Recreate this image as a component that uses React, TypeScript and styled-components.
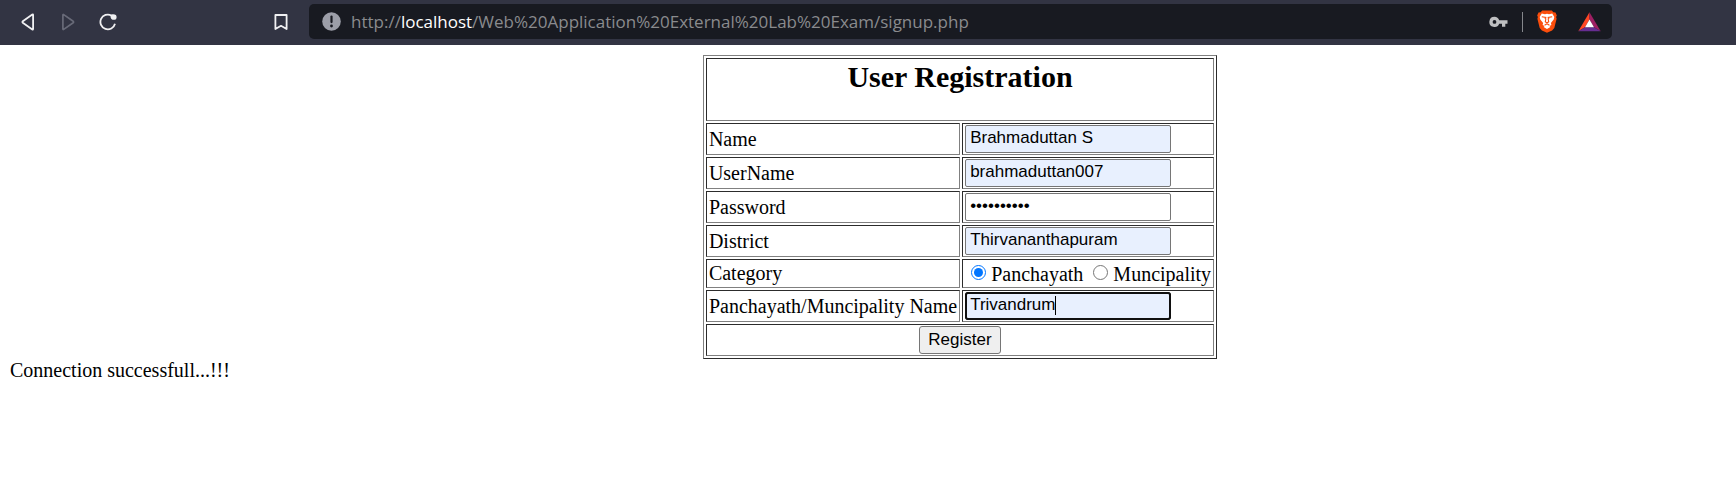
import React, { useEffect, useLayoutEffect, useRef, useState } from "react";
import styled, { createGlobalStyle } from "styled-components";

const GlobalStyle = createGlobalStyle`
  * { box-sizing: border-box; }
  body {
    margin: 0;
    background: #fff;
    color: #000;
    font-family: "Liberation Serif", "Times New Roman", serif;
    font-size: 20px;
    line-height: 23px;
  }
`;

const Toolbar = styled.header`
  display: flex;
  align-items: center;
  height: 45px;
  padding: 0 124px 2px 16px;
  background: #323443;
`;

const NavGroup = styled.nav`
  display: flex;
  flex: 1;
  gap: 16px;
  max-width: 253px;
`;

const ToolButton = styled.button`
  display: flex;
  align-items: center;
  justify-content: center;
  width: 24px;
  height: 24px;
  padding: 0;
  border: 0;
  background: none;
  color: #f0f0f2;

  &:disabled { color: #686a78; }
`;

const AddressBar = styled.div`
  display: flex;
  flex: 1;
  align-items: center;
  gap: 10px;
  height: 35px;
  margin-left: 16px;
  padding: 0 11px 0 13px;
  border-radius: 5px;
  background: #181a21;
`;

const Address = styled.div`
  flex: 1;
  color: #8a8b8e;
  font-family: "Open Sans", "Noto Sans", sans-serif;
  font-size: 17px;
  line-height: 24px;
  white-space: nowrap;
`;

const Host = styled.span`
  color: #fff;
`;

const Extras = styled.div<{ $gap: number }>`
  display: flex;
  align-items: center;
  gap: ${(p) => p.$gap}px;
`;

const Divider = styled.span`
  width: 1px;
  height: 20px;
  background: #85878c;
`;

const Page = styled.main`
  padding: 10px;
`;

const Form = styled.form`
  padding-left: 184px;
`;

const FormTable = styled.table`
  margin: 0 auto;
  border: 1px solid;
  border-color: #808080 #2c2c2c #2c2c2c #808080;
  border-spacing: 2px;
`;

const Cell = styled.td<{ $center?: boolean }>`
  padding: 1px 2px;
  border: 1px solid;
  border-color: #2c2c2c #808080 #808080 #2c2c2c;
  text-align: ${(p) => (p.$center ? "center" : "left")};
  white-space: nowrap;
`;

const Title = styled.h2`
  margin: 0 0 25px;
  font-size: 30px;
  line-height: 34px;
`;

const FieldBox = styled.div`
  position: relative;
  width: 206px;
`;

const TextField = styled.input<{ $filled?: boolean }>`
  display: block;
  width: 206px;
  height: 28px;
  padding: 0 4px 2px;
  border: 1px solid #767676;
  border-radius: 2px;
  background: ${(p) => (p.$filled ? "#e8f0fe" : "#fff")};
  color: #000;
  font-family: "Liberation Sans", Arial, sans-serif;
  font-size: 17px;

  &:focus {
    border-color: #101010;
    border-radius: 3px;
    outline: 2px solid #101010;
    outline-offset: -2px;
  }
`;

const CaretField = styled(TextField)`
  caret-color: transparent;
`;

const Caret = styled.span`
  position: absolute;
  top: 4px;
  width: 1px;
  height: 19px;
  background: #000;
  pointer-events: none;
`;

const Choices = styled.div`
  display: flex;
  align-items: center;
  gap: 10px;
  height: 25px;
  padding-left: 6px;
`;

const Choice = styled.label`
  display: flex;
  align-items: center;
  gap: 5px;
  padding-top: 2px;
`;

const Radio = styled.input`
  width: 15px;
  height: 15px;
  margin: 0 0 4px;
`;

const SubmitButton = styled.button`
  display: block;
  height: 28px;
  margin: 0 auto;
  padding: 0 8px 1px;
  border: 1px solid #767676;
  border-radius: 3px;
  background: #efefef;
  color: #000;
  font-family: "Liberation Sans", Arial, sans-serif;
  font-size: 17px;
`;

const Status = styled.p`
  margin: 0;
`;

const BackIcon = () => (
  <svg width="14" height="18" viewBox="0 0 14 18" fill="none" stroke="currentColor" strokeWidth="1.8" strokeLinejoin="round">
    <path d="M12.1 1.9q0-.8-.8-.3L1.800 8.300q-.8.7 0 1.400l9.500 6.700q.8.5.8-.3z" />
  </svg>
);

const ForwardIcon = () => (
  <svg width="14" height="18" viewBox="0 0 14 18" fill="none" stroke="currentColor" strokeWidth="1.700" strokeLinejoin="round">
    <path d="M1.900 1.900q0-.8.8-.3l9.500 6.700q.8.700 0 1.400l-9.500 6.700q-.8.500-.8-.3z" />
  </svg>
);

const ReloadIcon = () => (
  <svg width="18" height="18" viewBox="0 0 18 18" fill="none">
    <path d="M12.400 2.500A7.400 7.400 0 1 0 16 10.800" stroke="currentColor" strokeWidth="1.800" />
    <path d="M11.500 3.200Q11.500 1.300 13.500 1.300Q17.800 1 17.600 4.600Q17.400 7 15.500 6.800Q11.500 7 11.500 3.200z" fill="currentColor" />
  </svg>
);

const BookmarkIcon = () => (
  <svg width="14" height="18" viewBox="0 0 14 18" fill="none" stroke="currentColor" strokeWidth="1.8" strokeLinejoin="round">
    <path d="M1.400 2h11.200v14L7 12.800 1.400 16z" />
  </svg>
);

const InfoIcon = () => (
  <svg width="19" height="19" viewBox="0 0 19 19">
    <circle cx="9.5" cy="9.5" r="9.3" fill="#9c9ea8" />
    <path d="M9.500 4.500v5.600" stroke="#181a21" strokeWidth="2.200" strokeLinecap="round" />
    <circle cx="9.5" cy="14" r="1.4" fill="#181a21" />
  </svg>
);

const KeyIcon = () => (
  <svg width="19" height="12" viewBox="0 0 19 12">
    <path d="M5.500.8a5.100 5.100 0 1 0 4.700 7H13v3h3.300v-3H18.500V4.200h-8.300A5.100 5.100 0 0 0 5.500.8z" fill="#bfc0c2" />
    <circle cx="5.5" cy="5.900" r="1.900" fill="#181a21" />
  </svg>
);

const LionIcon = () => (
  <svg width="20" height="23" viewBox="0 0 20 23">
    <path d="M5.200.5h9.600l1.500 1.700 2.200.2 1.300 3-.7 1.700.5 1.700-2.300 9.300-2.200 2.400-5.100 2.300-5.100-2.300-2.200-2.400L.4 8.800l.5-1.700L.2 5.400l1.300-3 2.200-.2z" fill="#fb4e0c" />
    <path d="M4.800 3.600 8 4.200l2-.5 2 .5 3.200-.6 2.100 3.400-.6 2.400-2.800 3.600.5 2-2 1 1 .9L10 19l-3.400-2.100 1-.9-2-1 .5-2-2.800-3.600-.6-2.400z" fill="#fff" />
    <path d="m4.800 6.700 4 .7-.9 1.400M15.200 6.700l-4 .7.900 1.400M8.900 8.500l-.6 3.200L10 13l1.700-1.300-.6-3.200M7.600 15.200 10 13.700l2.400 1.500" fill="none" stroke="#fb4e0c" strokeWidth="1.100" />
  </svg>
);

const TriangleIcon = () => (
  <svg width="23" height="20" viewBox="0 0 23 20">
    <path d="M11.500.3v7.200L7 15.300.3 19.300z" fill="#ff4724" />
    <path d="m11.500.3 11.200 19L16 15.300 11.500 7.500z" fill="#9e1f63" />
    <path d="M.3 19.300 7 15.300h9l6.700 4z" fill="#662d91" />
    <path d="m11.500 7.500 4.500 7.800H7z" fill="#fff" />
  </svg>
);

export default function App() {
  const [name, setName] = useState("Brahmaduttan S");
  const [userName, setUserName] = useState("brahmaduttan007");
  const [password, setPassword] = useState("password12");
  const [district, setDistrict] = useState("Thirvananthapuram");
  const [category, setCategory] = useState("panchayath");
  const [body, setBody] = useState("Trivandrum");
  const [caret, setCaret] = useState(0);
  const [focused, setFocused] = useState(true);
  const bodyField = useRef<HTMLInputElement>(null);

  // Keeps the drawn caret behind the last character before the insertion point.
  const placeCaret = () => {
    const field = bodyField.current;
    const context = document.createElement("canvas").getContext("2d");
    if (!field || !context) return;
    const style = getComputedStyle(field);
    context.font = `${style.fontSize} ${style.fontFamily}`;
    const before = field.value.slice(0, field.selectionStart ?? field.value.length);
    setCaret(Math.round(context.measureText(before).width) + 5);
  };

  useEffect(() => {
    const field = bodyField.current;
    field?.focus();
    field?.setSelectionRange(field.value.length, field.value.length);
    placeCaret();
  }, []);

  useLayoutEffect(placeCaret, [body]);

  return (
    <>
      <GlobalStyle />
      <Toolbar>
        <NavGroup aria-label="Browser">
          <ToolButton aria-label="Back"><BackIcon /></ToolButton>
          <ToolButton aria-label="Forward" disabled><ForwardIcon /></ToolButton>
          <ToolButton aria-label="Reload"><ReloadIcon /></ToolButton>
        </NavGroup>
        <ToolButton aria-label="Bookmark"><BookmarkIcon /></ToolButton>
        <AddressBar>
          <InfoIcon />
          <Address>
            http://<Host>localhost</Host>/Web%20Application%20External%20Lab%20Exam/signup.php
          </Address>
          <Extras $gap={12}>
            <ToolButton aria-label="Saved passwords"><KeyIcon /></ToolButton>
            <Divider />
            <Extras $gap={18}>
              <ToolButton aria-label="Shields"><LionIcon /></ToolButton>
              <ToolButton aria-label="Rewards"><TriangleIcon /></ToolButton>
            </Extras>
          </Extras>
        </AddressBar>
      </Toolbar>
      <Page>
        <Form onSubmit={(e) => e.preventDefault()}>
          <FormTable>
            <tbody>
              <tr>
                <Cell colSpan={2} $center><Title>User Registration</Title></Cell>
              </tr>
              <tr>
                <Cell><label htmlFor="name">Name</label></Cell>
                <Cell><TextField id="name" $filled value={name} onChange={(e) => setName(e.target.value)} /></Cell>
              </tr>
              <tr>
                <Cell><label htmlFor="username">UserName</label></Cell>
                <Cell><TextField id="username" $filled value={userName} onChange={(e) => setUserName(e.target.value)} /></Cell>
              </tr>
              <tr>
                <Cell><label htmlFor="password">Password</label></Cell>
                <Cell><TextField id="password" type="password" value={password} onChange={(e) => setPassword(e.target.value)} /></Cell>
              </tr>
              <tr>
                <Cell><label htmlFor="district">District</label></Cell>
                <Cell><TextField id="district" $filled value={district} onChange={(e) => setDistrict(e.target.value)} /></Cell>
              </tr>
              <tr>
                <Cell>Category</Cell>
                <Cell>
                  <Choices role="radiogroup" aria-label="Category">
                    <Choice>
                      <Radio type="radio" name="category" checked={category === "panchayath"} onChange={() => setCategory("panchayath")} />
                      Panchayath
                    </Choice>
                    <Choice>
                      <Radio type="radio" name="category" checked={category === "muncipality"} onChange={() => setCategory("muncipality")} />
                      Muncipality
                    </Choice>
                  </Choices>
                </Cell>
              </tr>
              <tr>
                <Cell><label htmlFor="body">Panchayath/Muncipality Name</label></Cell>
                <Cell>
                  <FieldBox>
                    <CaretField
                      id="body"
                      ref={bodyField}
                      $filled
                      value={body}
                      onChange={(e) => setBody(e.target.value)}
                      onSelect={placeCaret}
                      onFocus={() => setFocused(true)}
                      onBlur={() => setFocused(false)}
                    />
                    {focused && <Caret style={{ left: caret }} />}
                  </FieldBox>
                </Cell>
              </tr>
              <tr>
                <Cell colSpan={2} $center><SubmitButton type="submit">Register</SubmitButton></Cell>
              </tr>
            </tbody>
          </FormTable>
        </Form>
        <Status>Connection successfull...!!!</Status>
      </Page>
    </>
  );
}
